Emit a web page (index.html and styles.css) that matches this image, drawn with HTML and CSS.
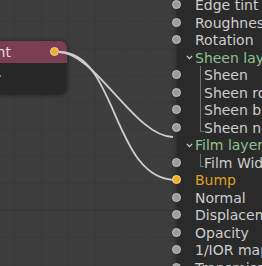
FILE: index.html
```html
<!DOCTYPE html>
<html lang="en">
<head>
    <meta charset="UTF-8">
    <title>Node editor</title>
    <link rel="stylesheet" href="styles.css">
</head>
<body>
    <div class="editor">
        <div class="node node-src">
            <div class="node-head">
                <span class="node-title">Gradient</span>
                <span class="socket socket-yellow socket-head"></span>
            </div>
            <div class="node-body"><span class="mark"></span></div>
        </div>

        <svg class="wires" width="262" height="266" viewBox="0 0 262 266">
            <path d="M59 52 C 95 52, 135 137, 173 137" />
            <path d="M59 52 C 118 52, 112 180, 176 180" />
        </svg>

        <div class="node node-bsdf">
            <div class="row"><span class="socket"></span>Edge tint</div>
            <div class="row"><span class="socket"></span>Roughness</div>
            <div class="row"><span class="socket"></span>Rotation</div>
            <div class="row panel">
                <svg class="chevron" width="7" height="5" viewBox="0 0 7 5"><polyline points="0.8,0.8 3.5,3.6 6.2,0.8" /></svg>
                Sheen layer
            </div>
            <div class="row sub"><span class="socket"></span><span class="guide"></span>Sheen</div>
            <div class="row sub"><span class="socket"></span><span class="guide"></span>Sheen roughness</div>
            <div class="row sub"><span class="socket"></span><span class="guide"></span>Sheen built-in</div>
            <div class="row sub"><span class="socket"></span><span class="guide last"></span>Sheen normal</div>
            <div class="row panel">
                <svg class="chevron" width="7" height="5" viewBox="0 0 7 5"><polyline points="0.8,0.8 3.5,3.6 6.2,0.8" /></svg>
                Film layer
            </div>
            <div class="row sub"><span class="socket"></span><span class="guide last"></span>Film Width</div>
            <div class="row linked"><span class="socket socket-yellow"></span>Bump</div>
            <div class="row"><span class="socket"></span>Normal</div>
            <div class="row"><span class="socket"></span>Displacement</div>
            <div class="row"><span class="socket"></span>Opacity</div>
            <div class="row"><span class="socket"></span>1/IOR map</div>
            <div class="row"><span class="socket"></span>Transmission</div>
        </div>
    </div>
</body>
</html>
```

FILE: styles.css
```css
body {
    margin: 0;
    background: #3d3d3d;
    font-family: "DejaVu Sans", sans-serif;
}
.editor {
    position: relative;
    width: 262px;
    height: 266px;
    overflow: hidden;
    background-color: #3e3e3e;
    background-image:
        linear-gradient(to bottom, transparent 210px, #363636 210px, #363636 211px, transparent 211px),
        repeating-linear-gradient(to right, transparent 0, transparent 14px, #3a3a3a 14px, #3a3a3a 15px, transparent 15px, transparent 27px),
        repeating-linear-gradient(to bottom, transparent 0, transparent 21px, #3a3a3a 21px, #3a3a3a 22px, transparent 22px, transparent 27px);
}

/* source node, cut by the left edge */
.node {
    position: absolute;
    border-radius: 7px;
    box-shadow: 0 0 5px rgba(0,0,0,0.45);
}
.node-src {
    left: -80px;
    top: 41px;
    width: 147px;
    overflow: visible;
}
.node-head {
    position: relative;
    height: 22px;
    padding-left: 30px;
    display: flex;
    align-items: center;
    background: #7b3d52;
    border-radius: 7px 7px 0 0;
    color: #e8d8dc;
    font-size: 14px;
}
.node-body {
    position: relative;
    height: 32px;
    background: #282828;
    border-radius: 0 0 7px 7px;
}
.mark {
    position: absolute;
    left: 79px;
    top: 12px;
    width: 2px;
    height: 2px;
    background: #8a8a40;
}

.socket {
    position: absolute;
    left: -5px;
    top: 4px;
    width: 7px;
    height: 7px;
    border-radius: 50%;
    background: #9c9c9c;
    border: 1.5px solid #c2c2c2;
}
.socket-yellow {
    background: #eeb020;
    border-color: #f2d9a0;
}
.socket-head {
    left: auto;
    right: 8px;
    top: 6px;
    border-color: #e9c9b4;
}

.wires {
    position: absolute;
    left: 0;
    top: 0;
}
.wires path {
    fill: none;
    stroke: #cfcfcf;
    stroke-width: 1.8;
}

/* principled node on the right */
.node-bsdf {
    left: 177px;
    top: -40px;
    width: 200px;
    padding: 36.25px 0 20px;
    background: #2a2a2a;
    box-shadow: 0 0 8px rgba(0,0,0,0.35);
}
.row {
    position: relative;
    height: 17.5px;
    display: flex;
    align-items: center;
    padding-left: 18px;
    color: #cdcdcd;
    font-size: 14px;
    white-space: nowrap;
}
.panel {
    padding-left: 9px;
    color: #8fc28f;
}
.chevron {
    margin-right: 2px;
}
.chevron polyline {
    fill: none;
    stroke: #d2d2d2;
    stroke-width: 1.2;
}
.sub {
    padding-left: 23px;
}
.guide {
    align-self: stretch;
    width: 3px;
    border-left: 1px solid #707070;
}
.guide.last {
    align-self: flex-start;
    height: 12px;
    border-bottom: 1px solid #707070;
}
.linked {
    color: #dea023;
}
```
